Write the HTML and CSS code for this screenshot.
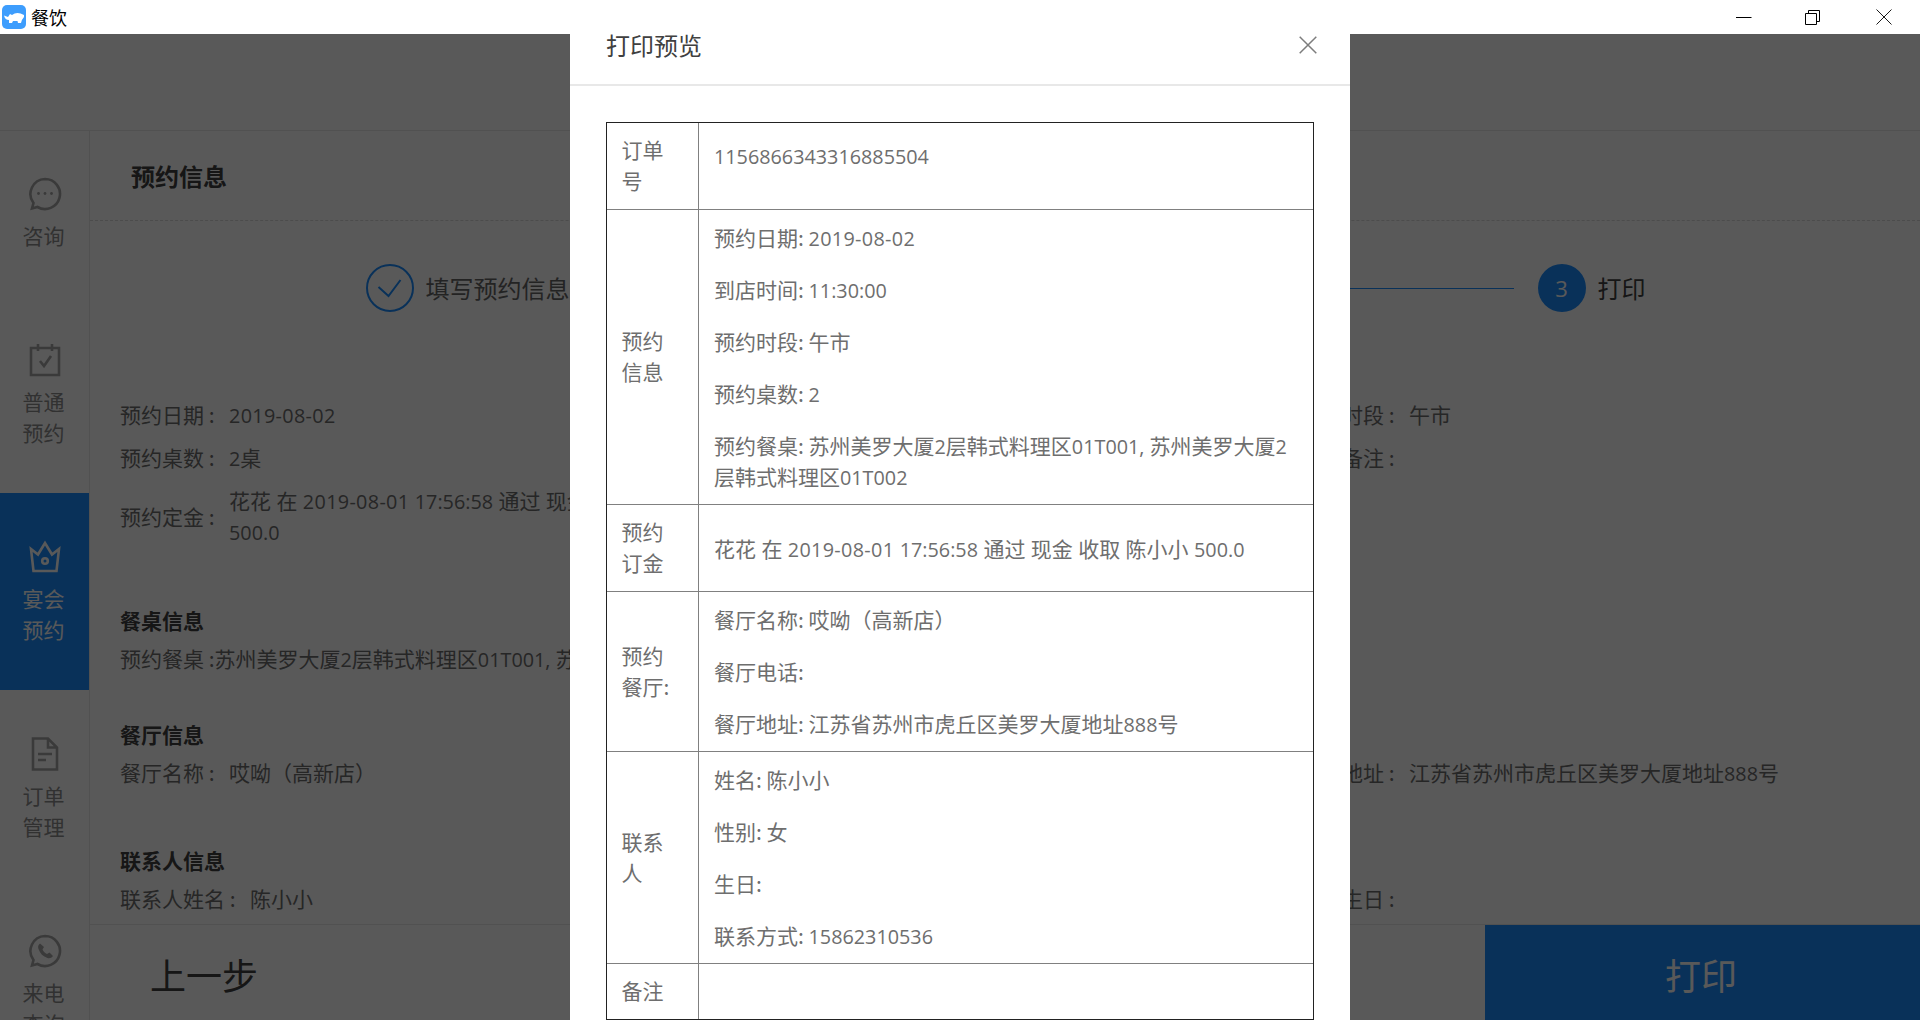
FILE: index.html
```html
<!DOCTYPE html>
<html lang="zh-CN">
<head>
<meta charset="utf-8">
<title>餐饮</title>
<link rel="stylesheet" href="styles.css">
</head>
<body>
<div class="app">
  <header class="titlebar">
    <div class="brand">
      <svg class="logo" viewBox="0 0 24 24"><rect width="24" height="24" rx="5" fill="#3d9dfd"/><path d="M2 10.500 6 12 8 9 10 10Q15 6 22 10V12Q20 14 19 18H16L15.500 16H11L10 18H7V15Q3 15 2 10.500Z" fill="#fff"/></svg>
      <span class="brand-name">餐饮</span>
    </div>
    <div class="winctl">
      <span class="winbtn"><svg viewBox="0 0 16 16" class="winicon"><path d="M0 8.500H15.500" stroke="#000" fill="none"/></svg></span>
      <span class="winbtn winbtn-restore"><svg viewBox="0 0 16 16" class="winicon"><path d="M.5 4.500H11.500V15.500H.5ZM3.500 4.500V1.500H14.500V12.500H11.500" stroke="#000" fill="none"/></svg></span>
      <span class="winbtn"><svg viewBox="0 0 16 16" class="winicon"><path d="M.5.500 15.500 15.500M15.500.500 .5 15.500" stroke="#000" stroke-width=".9" fill="none"/></svg></span>
    </div>
  </header>

  <div class="stage">
    <div class="topbar"></div>
    <div class="main">
      <nav class="side">
        <div class="navitem navitem-single">
          <svg class="navicon" viewBox="0 0 34 34"><path d="M17 2A15 15 0 1 1 9.500 30L4 31.500 5.500 26A15 15 0 0 1 17 2Z" class="ico"/><circle cx="10.500" cy="16.500" r="1.400" class="ico-fill"/><circle cx="17" cy="16.500" r="1.400" class="ico-fill"/><circle cx="23.500" cy="16.500" r="1.400" class="ico-fill"/></svg>
          <span class="navlabel">咨询</span>
        </div>
        <div class="navitem">
          <svg class="navicon" viewBox="0 0 34 34"><path d="M3 5H31V32H3ZM10 1V8M24 1V8M12 18 16 23 23 13" class="ico"/></svg>
          <span class="navlabel">普通<br>预约</span>
        </div>
        <div class="navitem navitem-active">
          <svg class="navicon" viewBox="0 0 34 34"><path d="M3 9 10 14.500 17 3 24 14.500 31 9 28.500 31H5.500Z" class="ico"/><circle cx="17" cy="21" r="2.800" class="ico"/></svg>
          <span class="navlabel">宴会<br>预约</span>
        </div>
        <div class="navitem">
          <svg class="navicon" viewBox="0 0 34 34"><path d="M5 1.500H20L29 10.500V32.500H5ZM20 1.500V10.500H29M10 17H24M10 23H18" class="ico"/></svg>
          <span class="navlabel">订单<br>管理</span>
        </div>
        <div class="navitem">
          <svg class="navicon" viewBox="0 0 34 34"><path d="M17 2A15 15 0 1 1 9.500 30L4 31.500 5.500 26A15 15 0 0 1 17 2Z" class="ico"/><path d="M12 9.500C10 11 9.800 13 10.500 15 12 19.500 15 22.500 19.500 24 21.500 24.700 23.500 24 25 22L21.500 18.500 19 20C17 19 15.500 17.500 14.500 15.500L16 13Z" class="ico-fill"/></svg>
          <span class="navlabel">来电<br>查询</span>
        </div>
      </nav>

      <section class="content">
        <h1 class="pagetitle">预约信息</h1>
        <div class="steps">
          <div class="step">
            <svg class="stepdone" viewBox="0 0 48 48"><circle cx="24" cy="24" r="23" class="stepring"/><path d="M12.500 23 22.500 32 34.500 16" class="stepring"/></svg>
            <span class="steptext">填写预约信息</span>
          </div>
          <i class="stepline"></i>
          <div class="step">
            <span class="stepnum">2</span>
            <span class="steptext">确认信息</span>
          </div>
          <i class="stepline"></i>
          <div class="step">
            <span class="stepnum">3</span>
            <span class="steptext steptext-current">打印</span>
          </div>
        </div>

        <div class="details">
          <div class="fields">
            <div class="field"><span class="k">预约日期 :</span><span class="v"><span class="n d">2019-08-02</span></span></div>
            <div class="field"><span class="k">到店时间 :</span><span class="v"><span class="n">11:30:00</span></span></div>
            <div class="field"><span class="k">预约时段 :</span><span class="v">午市</span></div>
            <div class="field"><span class="k">预约桌数 :</span><span class="v"><span class="n">2</span>桌</span></div>
            <div class="field"><span class="k">联系电话 :</span><span class="v"></span></div>
            <div class="field"><span class="k">预约备注 :</span><span class="v"></span></div>
            <div class="field"><span class="k">预约定金 :</span><span class="v sentence">花花 在 <span class="n d">2019-08-01</span> <span class="n">17:56:58</span> 通过 现金 收取 陈小小 <span class="n">500.0</span></span></div>
          </div>

          <h2 class="sec">餐桌信息</h2>
          <p class="line">预约餐桌 :苏州美罗大厦<span class="n">2</span>层韩式料理区<span class="n">01T001, </span>苏州美罗大厦<span class="n">2</span>层韩式料理区<span class="n">01T002</span></p>

          <h2 class="sec">餐厅信息</h2>
          <div class="fields">
            <div class="field"><span class="k">餐厅名称 :</span><span class="v">哎呦（高新店）</span></div>
            <div class="field"><span class="k">餐厅电话 :</span><span class="v"></span></div>
            <div class="field"><span class="k">餐厅地址 :</span><span class="v">江苏省苏州市虎丘区美罗大厦地址<span class="n">888</span>号</span></div>
          </div>

          <h2 class="sec">联系人信息</h2>
          <div class="fields">
            <div class="field"><span class="k">联系人姓名 :</span><span class="v">陈小小</span></div>
            <div class="field"><span class="k">联系人性别 :</span><span class="v">女</span></div>
            <div class="field"><span class="k">联系生日 :</span><span class="v"></span></div>
          </div>
        </div>

        <footer class="actions">
          <span class="prev">上一步</span>
          <span class="print">打印</span>
        </footer>
      </section>
    </div>

    <div class="mask"></div>

    <div class="modal">
      <div class="modal-head">
        <span class="modal-title">打印预览</span>
        <svg class="modal-close" viewBox="0 0 18 18"><path d="M.7.700 17.300 17.300M17.300.700 .7 17.300" stroke="#7d7d7d" stroke-width="1.500" fill="none"/></svg>
      </div>
      <div class="modal-body">
        <table class="sheet">
          <colgroup><col class="col-label"><col></colgroup>
          <tbody>
            <tr>
              <td class="label">订单号</td>
              <td class="value"><p class="para para-last-gap"><span class="n">1156866343316885504</span></p></td>
            </tr>
            <tr>
              <td class="label">预约信息</td>
              <td class="value">
                <p class="para">预约日期: <span class="n d">2019-08-02</span></p>
                <p class="para">到店时间: <span class="n">11:30:00</span></p>
                <p class="para">预约时段: 午市</p>
                <p class="para">预约桌数: <span class="n">2</span></p>
                <p class="para">预约餐桌: 苏州美罗大厦<span class="n">2</span>层韩式料理区<span class="n">01T001, </span>苏州美罗大厦<span class="n">2</span>层韩式料理区<span class="n">01T002</span></p>
              </td>
            </tr>
            <tr>
              <td class="label">预约订金</td>
              <td class="value sentence">花花 在 <span class="n d">2019-08-01</span> <span class="n">17:56:58</span> 通过 现金 收取 陈小小 <span class="n">500.0</span></td>
            </tr>
            <tr>
              <td class="label">预约餐厅:</td>
              <td class="value">
                <p class="para">餐厅名称: 哎呦（高新店）</p>
                <p class="para">餐厅电话:</p>
                <p class="para">餐厅地址: 江苏省苏州市虎丘区美罗大厦地址<span class="n">888</span>号</p>
              </td>
            </tr>
            <tr>
              <td class="label">联系人</td>
              <td class="value">
                <p class="para">姓名: 陈小小</p>
                <p class="para">性别: 女</p>
                <p class="para">生日:</p>
                <p class="para">联系方式: <span class="n">15862310536</span></p>
              </td>
            </tr>
            <tr>
              <td class="label">备注</td>
              <td class="value"></td>
            </tr>
          </tbody>
        </table>
      </div>
    </div>
  </div>
</div>
</body>
</html>
```

FILE: styles.css
```css
* { box-sizing: border-box; }
html, body { margin: 0; height: 100%; overflow: hidden; }
body {
  font-family: "Noto Sans CJK SC", "Open Sans", sans-serif;
  font-size: 21px;
  line-height: 31px;
  color: #6e6e6e;
  background: #fff;
}
.n { font-family: "Open Sans", "Noto Sans CJK SC", sans-serif; font-size: 19.8px; line-height: 0; }
.d { letter-spacing: .33px; }
.sentence { word-spacing: .7px; }

.app { width: 1920px; height: 1020px; display: flex; flex-direction: column; }

.titlebar {
  height: 34px;
  flex: none;
  display: flex;
  justify-content: space-between;
  align-items: center;
  background: #fff;
}
.brand { display: flex; align-items: center; padding-left: 2px; gap: 5px; }
.logo { width: 24px; height: 24px; display: block; }
.brand-name { font-size: 18px; line-height: 24px; color: #000; }
.winctl { display: flex; padding-right: 1px; }
.winbtn { width: 70px; height: 34px; display: flex; align-items: center; justify-content: center; }
.winbtn-restore { padding-right: 2px; }
.winicon { width: 16px; height: 16px; display: block; }

.stage { position: relative; flex: 1; min-height: 0; overflow: hidden; display: flex; flex-direction: column; }
.topbar { height: 97px; flex: none; border-bottom: 1px solid #e8e8e8; }
.main { flex: 1; min-height: 0; display: flex; }

.side { width: 90px; flex: none; border-right: 1px solid #e8e8e8; overflow: hidden; }
.navitem {
  height: 197px;
  width: 89px;
  padding-top: 47px;
  display: flex;
  flex-direction: column;
  align-items: center;
  color: #8c8c8c;
}
.navitem-single { height: 165px; padding-top: 46px; }
.navitem-active { background: #1a8cff; color: #fff; }
.navicon { width: 34px; height: 34px; display: block; flex: none; margin-bottom: 9px; }
.navlabel { text-align: center; margin-right: 2px; }
.ico { fill: none; stroke: #a6a6a6; stroke-width: 2.600; }
.ico-fill { fill: #a6a6a6; }
.navitem-active .ico { stroke: #fff; }

.content { flex: 1; min-width: 0; display: flex; flex-direction: column; }
.pagetitle {
  margin: 0;
  height: 90px;
  flex: none;
  padding-left: 41px;
  display: flex;
  align-items: center;
  font-size: 24px;
  font-weight: 700;
  color: #404040;
  border-bottom: 1px dashed #d9d9d9;
}

.steps {
  margin-top: 43px;
  height: 48px;
  flex: none;
  padding: 0 274.500px 0 275.500px;
  display: flex;
  align-items: center;
}
.step { display: flex; align-items: center; gap: 12px; flex: none; }
.stepdone { width: 48px; height: 48px; display: block; }
.stepring { fill: none; stroke: #1a8cff; stroke-width: 2; }
.steptext { font-size: 24px; line-height: 48px; color: #666; }
.steptext-current { color: #404040; }
.stepnum {
  width: 48px;
  height: 48px;
  border-radius: 50%;
  background: #1a8cff;
  color: #fff;
  font-size: 22px;
  line-height: 48px;
  text-align: center;
  font-family: "Open Sans", sans-serif;
}
.stepline { flex: 1; height: 1px; margin: 0 24px; background: #1a8cff; }

.details { margin-top: 87px; flex: 1; min-height: 0; overflow: hidden; padding-left: 30px; }
.details > .fields:first-child { padding-bottom: 1px; }
.fields { display: grid; grid-template-columns: repeat(3, 590px); }
.field { display: flex; align-items: center; margin-bottom: 12px; }
.k { flex: none; margin-right: 14.500px; }
.v { width: 481px; }
.sec { margin: 45px 0 7px; font-size: 21px; line-height: 31px; font-weight: 700; color: #404040; }
.line { margin: 0 0 1px; white-space: nowrap; }

.actions {
  height: 96px;
  flex: none;
  border-top: 1px solid #e8e8e8;
  display: flex;
  justify-content: space-between;
  align-items: stretch;
}
.prev { padding: 2px 0 0 60px; font-size: 36px; line-height: 95px; color: #404040; }
.print { width: 435px; padding: 2px 3px 0 0; background: #1a8cff; color: #fff; font-size: 36px; line-height: 95px; text-align: center; }

.mask { position: absolute; inset: 0; background: rgba(0, 0, 0, .65); }

.modal { position: absolute; top: -20px; left: 570px; width: 780px; background: #fff; }
.modal-head {
  height: 72px;
  padding: 0 36px 8px;
  display: flex;
  align-items: center;
  justify-content: space-between;
  border-bottom: 2px solid #e8e8e8;
}
.modal-title { font-size: 24px; line-height: 24px; color: #404040; }
.modal-close { width: 18px; height: 18px; display: block; margin-right: -3px; }
.modal-body { padding: 36px; }

.sheet {
  width: 708px;
  table-layout: fixed;
  border-collapse: separate;
  border-spacing: 0;
  border: 1px solid #222;
}
.col-label { width: 92px; }
.sheet td { padding: 12px 15px; vertical-align: middle; border-top: 1px solid #808080; }
.sheet tr:first-child td { border-top: 0; }
.sheet td.label { padding: 11px 15px 13px 14.500px; border-right: 1px solid #808080; }
.para { margin: 0 0 21px; }
.para:last-child { margin-bottom: 0; }
.para-last-gap:last-child { margin-bottom: 21px; }
```
